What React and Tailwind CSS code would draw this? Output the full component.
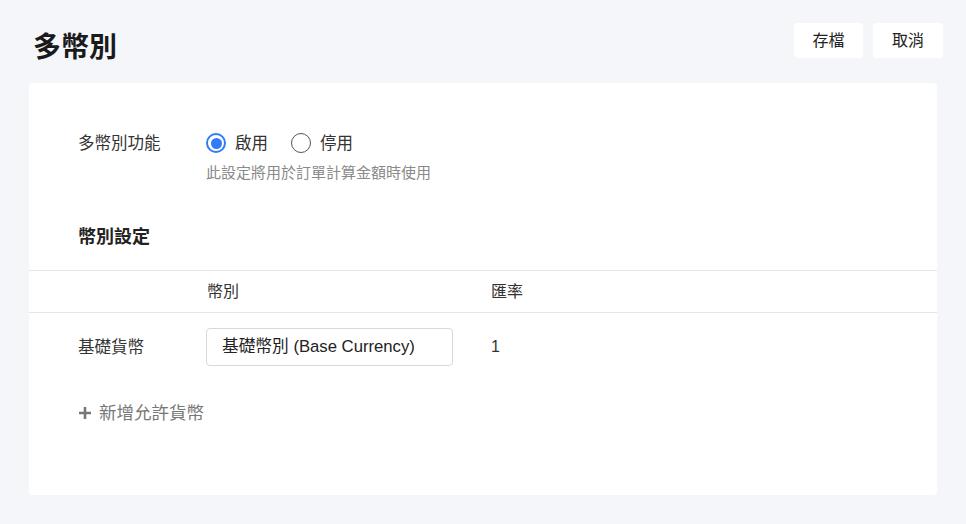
export default function App() {
  const font = { fontFamily: '"Liberation Sans", "Noto Sans CJK TC", sans-serif' };
  return (
    <div className="h-[524px] w-[966px] bg-[#f5f6fa] px-[29px] text-[#333]" style={font}>
      <div className="flex h-[83px] items-start justify-between pt-[23px]">
        <h1 className="mt-[9px] ml-[4px] text-[28px] leading-[32px] font-bold text-[#1a1a1a]">多幣別</h1>
        <div className="-mr-[6px] flex gap-[10px]">
          <button className="h-[35px] w-[69px] rounded-[4px] bg-white text-[16px] text-[#222]">存檔</button>
          <button className="h-[35px] w-[70px] rounded-[4px] bg-white text-[16px] text-[#222]">取消</button>
        </div>
      </div>
      <div className="h-[412px] rounded-[4px] bg-white pt-[50px]">
        <div className="flex px-[49px]">
          <div className="w-[128px] text-[16.5px] leading-[20px]">多幣別功能</div>
          <div className="-mt-[2px]">
            <div className="flex h-[24px] items-center">
              <label className="flex items-center">
                <span className="flex h-[20px] w-[20px] items-center justify-center rounded-full border-2 border-[#2f7cf6]">
                  <span className="h-[11px] w-[11px] rounded-full bg-[#2f7cf6]"></span>
                </span>
                <span className="ml-[9px] text-[16.5px]">啟用</span>
              </label>
              <label className="ml-[23px] flex items-center">
                <span className="h-[20px] w-[20px] rounded-full border border-[#555]"></span>
                <span className="ml-[9px] text-[16.5px]">停用</span>
              </label>
            </div>
            <div className="mt-[8px] text-[15px] leading-[20px] text-[#8a8a8a]">此設定將用於訂單計算金額時使用</div>
          </div>
        </div>
        <div className="mt-[42px] px-[49px] text-[18px] leading-[24px] font-bold text-[#222]">幣別設定</div>
        <div className="mt-[21px] flex h-[43px] items-center border-y border-[#e6e6e6] px-[49px] text-[16px]">
          <div className="w-[128px]"></div>
          <div className="w-[285px] pl-[1px]">幣別</div>
          <div>匯率</div>
        </div>
        <div className="flex items-center px-[49px] pt-[15px]">
          <div className="w-[128px] text-[16.5px]">基礎貨幣</div>
          <div className="w-[285px]">
            <div className="flex h-[38px] w-[247px] items-center rounded-[4px] border border-[#d9d9d9] pl-[15px] text-[16.7px] text-[#222]">
              基礎幣別 (Base Currency)
            </div>
          </div>
          <div className="text-[16px]">1</div>
        </div>
        <div className="mt-[35px] flex h-[24px] items-center px-[49px] text-[17.5px] text-[#777]">
          <svg width="14" height="14" viewBox="0 0 14 14" className="mr-[7px]">
            <path d="M7 1v12M1 7h12" stroke="#777" strokeWidth="2.6" />
          </svg>
          新增允許貨幣
        </div>
      </div>
    </div>
  );
}
